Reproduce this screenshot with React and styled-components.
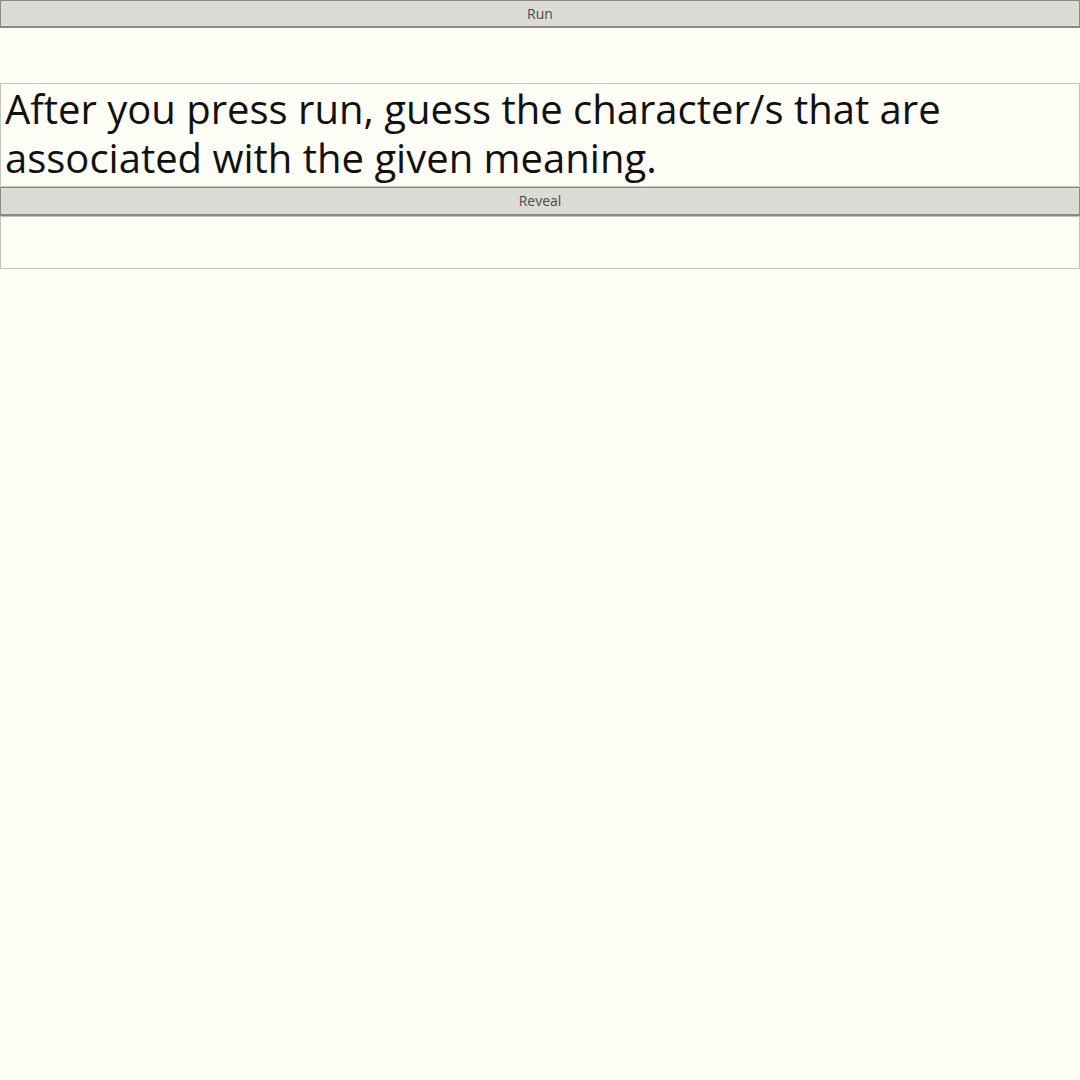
import React from 'react';
import styled, { createGlobalStyle } from 'styled-components';

const GlobalStyle = createGlobalStyle`
  html, body {
    margin: 0;
    padding: 0;
    background: #fffef6;
  }
  body {
    font-family: "Open Sans", "Noto Sans", sans-serif;
  }
`

const Page = styled.div`
  display: flex;
  flex-direction: column;
  width: 1080px;
  min-height: 1080px;
  background: #fffef6;
`

const Button = styled.button`
  display: block;
  width: 100%;
  height: ${p => p.$height || 28}px;
  margin: 0;
  padding: 0;
  border: 1px solid #8a8a84;
  border-bottom-width: 2px;
  background: #dcdcd6;
  color: #4a4a4a;
  font-family: "Open Sans", "Noto Sans", sans-serif;
  font-size: 14px;
  line-height: 1;
  cursor: pointer;
`

const Spacer = styled.div`
  height: ${p => p.$size}px;
`

const Prompt = styled.div`
  box-sizing: border-box;
  border: 1px solid #c4c4bc;
  padding: 0 4px 4px;
  font-size: 40px;
  line-height: 49px;
  color: #111;
  height: 104px;
`

const Answer = styled.div`
  box-sizing: border-box;
  border: 1px solid #c4c4bc;
  height: 53px;
`

const App = () => {
  return (
    <Page>
      <GlobalStyle />
      <Button>Run</Button>
      <Spacer $size={55} />
      <Prompt>
        After you press run, guess the character/s that are associated with the given meaning.
      </Prompt>
      <Button $height={29}>Reveal</Button>
      <Answer />
    </Page>
  )
}

export default App;
